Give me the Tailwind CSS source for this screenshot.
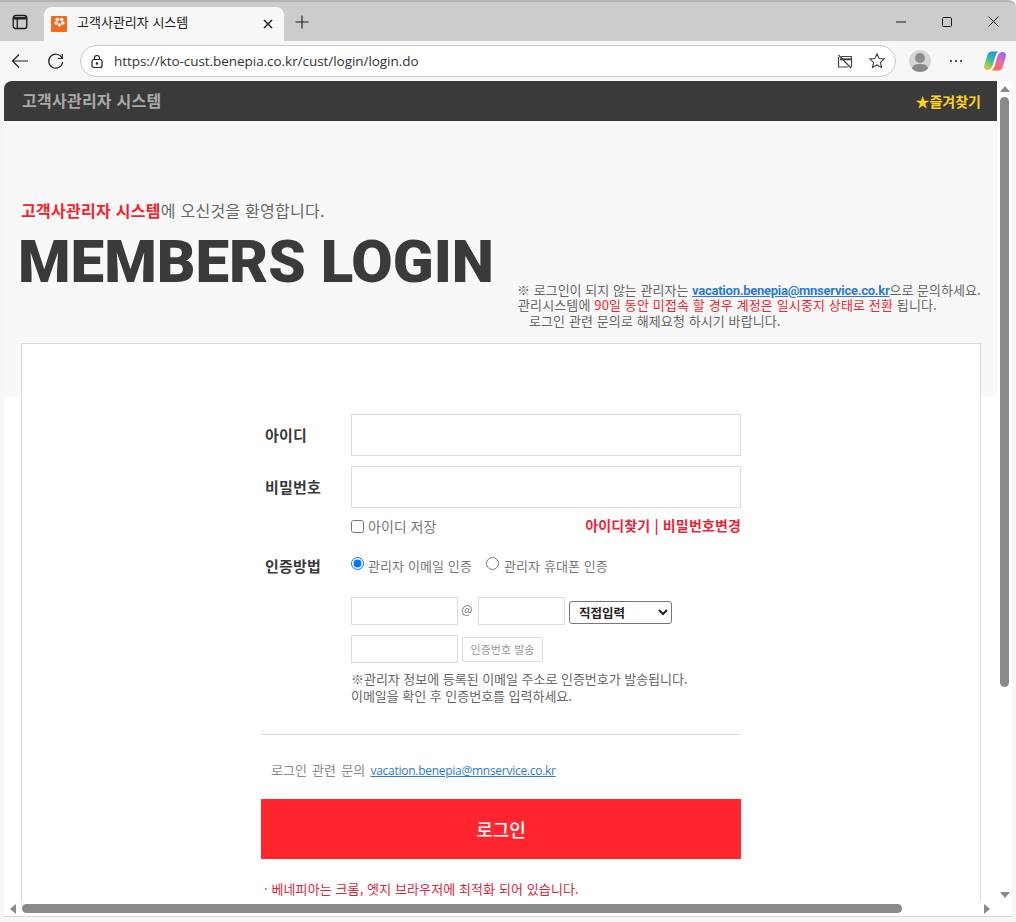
<!DOCTYPE html>
<html lang="ko">
<head>
<meta charset="utf-8">
<title>고객사관리자 시스템</title>
<script src="https://cdn.jsdelivr.net/npm/@tailwindcss/browser@4"></script>
</head>
<body class="bg-[#e8e8e8]">
<div class="w-[1016px] h-[922px] overflow-hidden flex flex-col font-['Noto_Sans_CJK_KR','Noto_Sans',sans-serif] bg-[#f7f7f7]">
  <!-- tab strip -->
  <div class="h-[41px] shrink-0 bg-[#cccccc] flex items-end rounded-tr-lg border-t-2 border-[#b4b4b4]">
    <div class="w-[40px] h-full flex items-center justify-center mr-[4px]">
      <svg width="16" height="16" viewBox="0 0 16 16" fill="none" stroke="#1a1a1a" stroke-width="1.3"><rect x="1.2" y="1.5" width="13.600" height="13" rx="2.600"/><path d="M1.500 4.300H14.500" stroke-width="2.400"/><path d="M5.300 4V14"/></svg>
    </div>
    <div class="w-[240px] h-[34px] bg-[#f7f7f7] rounded-t-lg flex items-center pl-[7px] pr-[11px]">
      <div class="w-4 h-4 bg-[#f26a1b] rounded-[1px] flex items-start justify-center pt-[1px] mr-[10px]">
        <svg width="11" height="11" viewBox="0 0 11 11" fill="#fff"><circle cx="3.300" cy="2.500" r="1.800"/><circle cx="7.700" cy="2.500" r="1.800"/><circle cx="2.200" cy="6" r="1.800"/><circle cx="8.800" cy="6" r="1.800"/><circle cx="5.500" cy="8" r="1.800"/></svg>
      </div>
      <span class="text-[13px] text-[#1a1a1a] leading-none -mt-[6px]">고객사관리자 시스템</span>
      <svg class="ml-auto" width="10" height="10" viewBox="0 0 10 10" stroke="#1a1a1a" stroke-width="1.4"><path d="M1 1L9 9M9 1L1 9"/></svg>
    </div>
    <div class="w-[36px] h-full flex items-center justify-center">
      <svg width="14" height="14" viewBox="0 0 14 14" stroke="#1a1a1a" stroke-width="1.1"><path d="M7 0.5V13.5M0.5 7H13.5"/></svg>
    </div>
    <div class="ml-auto h-full flex items-center -mt-[1px]">
      <div class="w-[46px] flex justify-center"><svg width="10" height="10" viewBox="0 0 10 10" stroke="#1a1a1a"><path d="M0 5H10"/></svg></div>
      <div class="w-[46px] flex justify-center"><svg width="10" height="10" viewBox="0 0 10 10" fill="none" stroke="#1a1a1a"><rect x=".5" y=".5" width="9" height="9" rx="1"/></svg></div>
      <div class="w-[46px] flex justify-center"><svg width="11" height="11" viewBox="0 0 11 11" stroke="#1a1a1a"><path d="M.5.5L10.5 10.5M10.5.5L.5 10.5"/></svg></div>
    </div>
  </div>
  <!-- toolbar -->
  <div class="h-[40px] shrink-0 flex items-center">
    <div class="w-[38px] ml-[1px] flex justify-center">
      <svg width="18" height="16" viewBox="0 0 18 16" fill="none" stroke="#1f1f1f" stroke-width="1.2"><path d="M17 8H1.500M8 1.500L1.500 8L8 14.500"/></svg>
    </div>
    <div class="w-[36px] -ml-[2px] mr-[2px] flex justify-center">
      <svg width="17" height="17" viewBox="0 0 17 17" fill="none" stroke="#1f1f1f" stroke-width="1.2"><path d="M15 5A7 7 0 1 0 15.700 9"/><path d="M15.300 1V5.500H10.800"/></svg>
    </div>
    <div class="w-[816px] h-[32px] ml-[5px] bg-white rounded-full border border-[#c9c9c9] flex items-center pl-[9px]">
      <svg width="14" height="15" viewBox="0 0 14 15" fill="none" stroke="#1f1f1f" stroke-width="1.2"><rect x="2" y="5.500" width="10" height="8" rx="2"/><path d="M4.500 5.500V4A2.500 2.500 0 0 1 9.500 4V5.500"/><circle cx="7" cy="9.500" r=".7" fill="#1f1f1f"/></svg>
      <span class="ml-[10px] mt-[2px] text-[13.5px] text-[#333] font-['Open_Sans','Noto_Sans',sans-serif] leading-none tracking-[-0.05px]">https://kto-cust.benepia.co.kr/cust/login/login.do</span>
      <svg class="ml-auto" width="16" height="15" viewBox="0 0 16 15" fill="none" stroke="#444" stroke-width="1.2"><path d="M4 2.500H14.500V13M11.500 13H1.500V3"/><path d="M3 5.300H14.500" stroke-width="2"/><path d="M1.500 1L14 14"/></svg>
      <svg class="ml-[15px] mr-[9px]" width="18" height="18" viewBox="0 0 18 18" fill="none" stroke="#444" stroke-width="1.1"><path d="M9 1.800L11.100 6.500L16.200 7L12.400 10.400L13.500 15.500L9 12.900L4.500 15.500L5.600 10.400L1.800 7L6.900 6.500Z"/></svg>
    </div>
    <div class="w-[22px] h-[22px] ml-[13px] rounded-full bg-[#d6d6d6] relative overflow-hidden">
      <div class="absolute left-[6px] top-[3px] w-[10px] h-[10px] rounded-full bg-[#8c8c8c]"></div>
      <div class="absolute left-[2px] top-[14px] w-[18px] h-[14px] rounded-full bg-[#8c8c8c]"></div>
    </div>
    <div class="ml-[19px] flex gap-[3px]"><i class="w-[2px] h-[2px] rounded-full bg-[#222]"></i><i class="w-[2px] h-[2px] rounded-full bg-[#222]"></i><i class="w-[2px] h-[2px] rounded-full bg-[#222]"></i></div>
    <svg class="ml-[21px]" width="24" height="22" viewBox="0 0 24 22">
      <defs>
        <linearGradient id="cpa" x1="0.8" y1="0" x2="0.2" y2="1"><stop offset="0" stop-color="#2a8fe8"/><stop offset="0.5" stop-color="#35c2a0"/><stop offset="1" stop-color="#f4c430"/></linearGradient>
        <linearGradient id="cpb" x1="0.8" y1="0" x2="0.2" y2="1"><stop offset="0" stop-color="#9a68ee"/><stop offset="0.55" stop-color="#ee6aa0"/><stop offset="1" stop-color="#f5703a"/></linearGradient>
      </defs>
      <path d="M8.500 1.500H15.500C14 2.500 13.300 3.500 12.800 5L10 14C9.300 17 7.500 20 4.500 20C2 20 .6 18 1.200 15.500L4 6C4.800 3 6 1.500 8.500 1.500Z" fill="url(#cpa)"/>
      <path d="M15.500 20.500H8.500C10 19.500 10.700 18.500 11.200 17L14 8C14.700 5 16.500 2 19.500 2C22 2 23.400 4 22.800 6.500L20 16C19.200 19 18 20.500 15.500 20.500Z" fill="url(#cpb)"/>
    </svg>
  </div>
  <!-- viewport row -->
  <div class="flex-1 min-h-0 flex pl-[4px] pr-[4px] pb-[5px]">
    <div class="flex-1 min-w-0 bg-white rounded-tl-lg overflow-hidden flex flex-col border-b border-[#d8d8d8]">
      <div class="flex flex-1 min-h-0">
        <!-- page -->
        <div class="flex-1 min-w-0 overflow-hidden relative bg-white">
          <div class="h-[40px] bg-[#3a3a3a] flex items-center pl-[18px] pr-[16px] justify-between">
            <span class="text-[16px] font-bold text-[#a9a9a9] tracking-[0.25px] leading-none -mt-[2px]">고객사관리자 시스템</span>
            <span class="text-[14px] font-bold text-[#ffd21f] leading-none -mt-[1px]">★즐겨찾기</span>
          </div>
          <div class="h-[276px] bg-[#f8f8f8]"></div>
          <!-- heading overlays grey band and card -->
          <div class="absolute left-[17px] top-[40px] w-[960px]">
            <div class="h-[222px] relative">
              <p class="absolute left-0 top-[78px] text-[16px] leading-[22px] text-[#666] tracking-[0.27px] whitespace-nowrap"><b class="font-bold text-[#f0242e]">고객사관리자 시스템</b>에 오신것을 환영합니다.</p>
              <h1 class="absolute -left-[3px] top-[105px] text-[60px] leading-[72px] font-['Roboto',sans-serif] font-black text-[#3a3a3a] tracking-normal whitespace-nowrap">MEMBERS LOGIN</h1>
              <div class="absolute left-[497px] top-[160px] text-[13px] leading-[16px] text-[#666] whitespace-nowrap tracking-[0.1px]">
                <p class="h-[16px] pt-[1px] -ml-[1px] tracking-[0.02px]">※ 로그인이 되지 않는 관리자는 <a class="font-bold text-[#2b7bd6] underline font-['Roboto',sans-serif] text-[13px] leading-none tracking-[-0.26px]">vacation.benepia@mnservice.co.kr</a>으로 문의하세요.</p>
                <p class="h-[16px] tracking-[0.13px]">관리시스템에 <span class="text-[#f0242e]">90일 동안 미접속 할 경우 계정은 일시중지 상태로 전환</span> 됩니다.</p>
                <p class="h-[16px] pl-[11px]">로그인 관련 문의로 해제요청 하시기 바랍니다.</p>
              </div>
            </div>
            <!-- card -->
            <div class="h-[640px] bg-white border border-[#dcdcdc] border-b-0 pt-[70px]">
              <div class="w-[480px] mx-auto">
                <div class="flex items-center h-[42px]">
                  <label class="w-[90px] pl-[4px] text-[15px] font-bold text-[#3a3a3a] tracking-[0.2px]">아이디</label>
                  <input class="w-[390px] h-[42px] border border-[#dcdcdc] bg-white" type="text">
                </div>
                <div class="flex items-center h-[42px] mt-[10px]">
                  <label class="w-[90px] pl-[4px] text-[15px] font-bold text-[#3a3a3a] tracking-[0.2px]">비밀번호</label>
                  <input class="w-[390px] h-[42px] border border-[#dcdcdc] bg-white" type="password">
                </div>
                <div class="flex items-center h-[20px] mt-[8px] pl-[90px] justify-between">
                  <label class="flex items-center text-[14px] text-[#777]"><input type="checkbox" class="w-[13px] h-[13px] mr-[4px] appearance-auto">아이디 저장</label>
                  <a class="text-[14px] font-bold text-[#e8263a] tracking-[0.15px] -mt-[1px]">아이디찾기 | 비밀번호변경</a>
                </div>
                <div class="flex items-center h-[20px] mt-[20px]">
                  <label class="w-[90px] pl-[4px] text-[15px] font-bold text-[#3a3a3a] tracking-[0.2px]">인증방법</label>
                  <label class="flex items-center text-[13px] text-[#777] tracking-[0.1px]"><input type="radio" name="m" checked class="w-[13px] h-[13px] mr-[4px] -mt-[5px] appearance-auto">관리자 이메일 인증</label>
                  <label class="flex items-center text-[13px] text-[#777] ml-[14px] tracking-[0.1px]"><input type="radio" name="m" class="w-[13px] h-[13px] mr-[5px] -mt-[5px] appearance-auto">관리자 휴대폰 인증</label>
                </div>
                <div class="pl-[90px] mt-[21px]">
                  <div class="flex items-center h-[28px]">
                    <input class="w-[107px] h-[28px] border border-[#dcdcdc] bg-white" type="text">
                    <span class="w-[20px] -ml-[1px] mr-[1px] text-center text-[12px] text-[#777] -mt-[4px]">@</span>
                    <input class="w-[87px] h-[28px] border border-[#dcdcdc] bg-white" type="text">
                    <select class="w-[103px] h-[23px] mt-[3px] ml-[4px] border border-[#767676] rounded-[3px] bg-white text-[12.5px] font-bold text-[#222] pl-[5px] appearance-auto"><option>직접입력</option></select>
                  </div>
                  <div class="flex items-center h-[28px] mt-[10px]">
                    <input class="w-[107px] h-[28px] border border-[#dcdcdc] bg-white" type="text">
                    <button class="w-[81px] h-[25px] ml-[4px] border border-[#dcdcdc] rounded-[2px] text-[11px] text-[#9a9a9a] bg-white pt-[1px]">인증번호 발송</button>
                  </div>
                  <p class="mt-[7px] text-[13px] leading-[17px] text-[#666] whitespace-nowrap tracking-[-0.03px]">※관리자 정보에 등록된 이메일 주소로 인증번호가 발송됩니다.<br>이메일을 확인 후 인증번호를 입력하세요.</p>
                </div>
                <hr class="mt-[30px] border-t border-[#dcdcdc]">
                <p class="mt-[26px] pl-[10px] text-[13px] leading-[18px] text-[#8a8a8a] [word-spacing:1.6px]">로그인 관련 문의 <a class="text-[#2b7bd6] underline font-['Open_Sans',sans-serif] text-[12px] leading-none tracking-[-0.27px] [word-spacing:0]">vacation.benepia@mnservice.co.kr</a></p>
                <button class="block w-[480px] h-[60px] mt-[20px] bg-[#ff242e] text-white text-[18px] font-medium">로그인</button>
                <p class="mt-[20px] text-[13px] leading-[20px] text-[#d9263a] pl-[3px] tracking-[0.1px]">· 베네피아는 크롬, 엣지 브라우저에 최적화 되어 있습니다.</p>
              </div>
            </div>
          </div>
        </div>
        <!-- vertical scrollbar -->
        <div class="w-[15px] shrink-0 bg-white flex flex-col items-center pt-[5px] pb-[3px]">
          <svg width="10" height="7" viewBox="0 0 10 7" fill="#8a8a8a"><path d="M5 0L10 6H0Z"/></svg>
          <div class="w-[9px] h-[590px] mt-[4px] rounded-full bg-[#8a8a8a]"></div>
          <svg class="mt-auto" width="10" height="7" viewBox="0 0 10 7" fill="#8a8a8a"><path d="M0 1H10L5 7Z"/></svg>
        </div>
      </div>
      <!-- horizontal scrollbar -->
      <div class="h-[15px] shrink-0 bg-white flex items-center pl-[6px] pr-[22px]">
        <svg width="7" height="10" viewBox="0 0 7 10" fill="#8a8a8a"><path d="M0 5L6 0V10Z"/></svg>
        <div class="w-[880px] h-[9px] ml-[5px] rounded-full bg-[#8a8a8a]"></div>
        <svg class="ml-auto" width="7" height="10" viewBox="0 0 7 10" fill="#8a8a8a"><path d="M7 5L1 0V10Z"/></svg>
      </div>
    </div>
  </div>
</div>
</body>
</html>
